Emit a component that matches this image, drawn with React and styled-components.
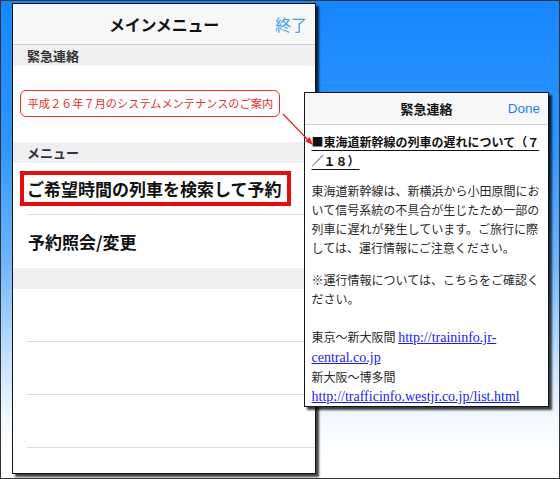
import React from 'react';
import styled, { createGlobalStyle } from 'styled-components';

const GlobalStyle = createGlobalStyle`
    html, body {
        margin: 0;
        padding: 0;
    }
    body {
        font-family: "Noto Sans CJK JP", "Noto Sans", sans-serif;
    }
`;

const Frame = styled.div`
    position: relative;
    width: 560px;
    height: 479px;
    box-sizing: border-box;
    border: 1px solid #333;
    overflow: hidden;
    background: linear-gradient(to bottom, #1786ff 0%, #2f95ff 30%, #6fb6ff 55%, #c4e1ff 75%, #f4f9fe 88%, #ffffff 95%);
    padding: 2px 0 0 11px;
`;

const Phone = styled.div`
    width: 304px;
    height: 471px;
    box-sizing: border-box;
    border: 1.5px solid #151515;
    background: #fff;
    box-shadow: 3px 3px 2px rgba(0, 0, 0, 0.75);
    display: flex;
    flex-direction: column;
    overflow: hidden;
`;

const NavBar = styled.div`
    height: 40px;
    flex-shrink: 0;
    display: flex;
    align-items: center;
    justify-content: center;
    position: relative;
    background: #f7f7f7;
    border-bottom: 1px solid #cfcfcf;
`;

const NavTitle = styled.div`
    font-size: 16px;
    font-weight: 700;
    color: #111;
    letter-spacing: -0.2px;
`;

const NavButton = styled.div`
    position: absolute;
    right: 8px;
    top: 0;
    bottom: 0;
    display: flex;
    align-items: center;
    font-size: ${p => p.size || 15}px;
    font-family: ${p => p.latin ? '"Liberation Sans", Arial, sans-serif' : 'inherit'};
    font-weight: ${p => p.weight || 400};
    color: ${p => p.color || '#3d9ef2'};
`;

const SectionHeader = styled.div`
    height: 21px;
    flex-shrink: 0;
    background: #efeff2;
    display: flex;
    align-items: center;
    padding-left: 14px;
    font-size: 13px;
    font-weight: 700;
    color: #333;
`;

const NoticeRow = styled.div`
    height: 76px;
    flex-shrink: 0;
    display: flex;
    align-items: center;
    padding: 0 0 2px 6.5px;
    box-sizing: border-box;
`;

const Callout = styled.div`
    height: 27px;
    box-sizing: border-box;
    border: 1.5px solid #e8322c;
    border-radius: 6px;
    background: #fff;
    padding: 0 6px 0 7px;
    display: flex;
    align-items: center;
    font-size: 11.2px;
    color: #e8302a;
    white-space: nowrap;
`;

const MenuRow = styled.div`
    height: ${p => p.h || 53}px;
    flex-shrink: 0;
    box-sizing: border-box;
    margin-left: 14px;
    padding-left: ${p => p.highlight ? 0 : 1}px;
    display: flex;
    align-items: center;
    border-bottom: ${p => p.line ? '1px solid #dedede' : 'none'};
    font-size: 17px;
    font-weight: 700;
    color: #111;
`;

const Highlight = styled.div`
    margin-left: -7px;
    margin-bottom: 1px;
    height: 35px;
    box-sizing: border-box;
    border: 4px solid #e60d0d;
    padding: 0 5px 0 3px;
    display: flex;
    align-items: center;
    white-space: nowrap;
`;

const Popup = styled.div`
    position: absolute;
    left: 303px;
    top: 91px;
    width: 245px;
    height: 315px;
    box-sizing: border-box;
    border: 1.5px solid #151515;
    background: #fff;
    box-shadow: 3px 3px 2px rgba(0, 0, 0, 0.75);
    display: flex;
    flex-direction: column;
`;

const PopupNav = styled(NavBar)`
    height: 31px;
`;

const PopupTitle = styled.div`
    font-size: 13px;
    font-weight: 700;
    color: #111;
`;

const PopupBody = styled.div`
    padding: 7px 6px 0 6.5px;
    font-size: 12px;
    line-height: 19px;
    color: #2a2a2a;
    white-space: nowrap;
`;

const Heading = styled.div`
    font-weight: 700;
    color: #111;
    text-decoration: underline;
    text-underline-offset: 3px;
    margin-bottom: 11px;
`;

const Para = styled.div`
    margin-bottom: ${p => p.gap || 13}px;
`;

const Link = styled.a`
    font-family: "Liberation Serif", "Times New Roman", serif;
    font-size: 14px;
    color: #1a1aee;
    text-decoration: underline;
`;

const ArrowLayer = styled.svg`
    position: absolute;
    left: 0;
    top: 0;
    pointer-events: none;
`;

const App = () => {
    return (
        <Frame>
            <GlobalStyle />
            <Phone>
                <NavBar>
                    <NavTitle>メインメニュー</NavTitle>
                    <NavButton size={16}>終了</NavButton>
                </NavBar>
                <SectionHeader>緊急連絡</SectionHeader>
                <NoticeRow>
                    <Callout>平成２６年７月のシステムメンテナンスのご案内</Callout>
                </NoticeRow>
                <SectionHeader>メニュー</SectionHeader>
                <MenuRow h={52} line highlight>
                    <Highlight>ご希望時間の列車を検索して予約</Highlight>
                </MenuRow>
                <MenuRow h={53}>予約照会/変更</MenuRow>
                <SectionHeader />
                <MenuRow line />
                <MenuRow line />
                <MenuRow line />
                <MenuRow />
            </Phone>

            <Popup>
                <PopupNav>
                    <PopupTitle>緊急連絡</PopupTitle>
                    <NavButton latin size={13.5} weight={500} color="#1a82f0">Done</NavButton>
                </PopupNav>
                <PopupBody>
                    <Heading>
                        ■東海道新幹線の列車の遅れについて（７<br />／１８）
                    </Heading>
                    <Para>
                        東海道新幹線は、新横浜から小田原間にお<br />
                        いて信号系統の不具合が生じたため一部の<br />
                        列車に遅れが発生しています。ご旅行に際<br />
                        しては、運行情報にご注意ください。
                    </Para>
                    <Para gap={19}>
                        ※運行情報については、こちらをご確認く<br />
                        ださい。
                    </Para>
                    <div>
                        東京〜新大阪間 <Link href="#">http://traininfo.jr-<br />central.co.jp</Link><br />
                        新大阪〜博多間<br />
                        <Link href="#">http://trafficinfo.westjr.co.jp/list.html</Link>
                    </div>
                </PopupBody>
            </Popup>

            <ArrowLayer width="560" height="479" viewBox="0 0 560 479">
                <line x1="282" y1="113" x2="307" y2="139" stroke="#e8201a" strokeWidth="1.2" />
                <polygon points="312,144 304.3,140.3 308.6,136.1" fill="#e8201a" />
            </ArrowLayer>
        </Frame>
    );
};

export default App;
